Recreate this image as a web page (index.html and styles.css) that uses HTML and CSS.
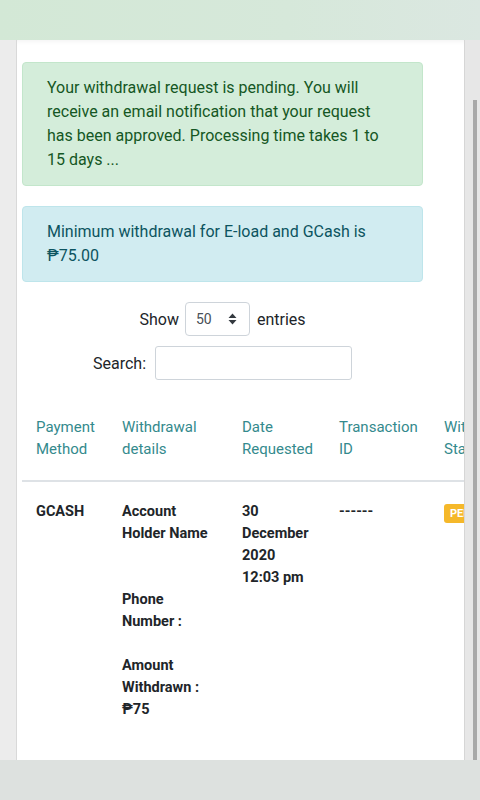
FILE: index.html
```html
<!DOCTYPE html>
<html>
<head>
  <title>Withdrawal History</title>
  <meta charset="UTF-8">
  <meta name="viewport" content="width=device-width, initial-scale=1.0">
  <link rel="stylesheet" href="styles.css">
</head>
<body>
  <div class="topbar"></div>

  <div class="frame">
    <div class="gutter-left"></div>

    <div class="card">
      <div class="content">
        <!-- Notices -->
        <div class="alert alert-success">
          Your withdrawal request is pending. You will receive an email notification that your request has been approved. Processing time takes 1 to 15 days ...
        </div>
        <div class="alert alert-info">
          Minimum withdrawal for E-load and GCash is &#8369;75.00
        </div>

        <!-- Table controls -->
        <div class="controls">
          <label class="control">Show
            <span class="select">50
              <svg class="arrows" width="9" height="12" viewBox="0 0 9 12"><path d="M4.5 0.5L8.5 5H0.5Z M4.5 11.5L8.5 7H0.5Z" fill="#343a40"/></svg>
            </span>
            entries</label>
          <label class="control">Search: <input type="text" class="search"></label>
        </div>

        <!-- Table -->
        <table class="history">
          <colgroup>
            <col style="width:86px">
            <col style="width:120px">
            <col style="width:97px">
            <col style="width:105px">
            <col style="width:90px">
          </colgroup>
          <thead>
            <tr>
              <th>Payment Method</th>
              <th>Withdrawal details</th>
              <th>Date Requested</th>
              <th>Transaction ID</th>
              <th>Withdrawal Status</th>
            </tr>
          </thead>
          <tbody>
            <tr>
              <td>GCASH</td>
              <td>
                Account Holder Name<br><br><br>
                Phone Number :<br><br>
                Amount Withdrawn : &#8369;75
              </td>
              <td>30 December 2020 12:03 pm</td>
              <td>------</td>
              <td><span class="badge">PENDING</span></td>
            </tr>
          </tbody>
        </table>
      </div>
    </div>

    <div class="gutter-right"><div class="scrollbar"></div></div>
  </div>

  <div class="bottombar"></div>
</body>
</html>
```

FILE: styles.css
```css
* { box-sizing: border-box; }
body { margin: 0; font-family: Roboto, "DejaVu Sans", sans-serif; color: #212529; background: #e8e8e8; height: 800px; overflow: hidden; }

.topbar { height: 40px; background: linear-gradient(90deg, #d3e8d6, #d6e8da 60%, #dbe7e1); }
.bottombar { height: 40px; background: #dde1df; }

.frame { display: flex; height: 720px; }
.gutter-left { width: 17px; background: #ececec; border-right: 1px solid #d9d9d9; }
.gutter-right { width: 16px; background: #e7e7e7; border-left: 1px solid #d6d6d6; padding: 60px 0 0 8px; }
.scrollbar { width: 4px; height: 100%; background: #a9a9a9; }

.card { width: 447px; background: #fff; overflow: hidden; padding: 22px 0 0 5px; box-shadow: inset 0 6px 6px -6px rgba(0,0,0,0.08); }
.content { width: 401px; }

.alert { font-size: 16px; line-height: 24px; padding: 13px 24px; border: 1px solid transparent; border-radius: 4px; margin-bottom: 20px; }
.alert-success { background: #d4edda; border-color: #c3e6cb; color: #155724; }
.alert-info { background: #d1ecf1; border-color: #bee5eb; color: #0c5460; }

.controls { display: flex; flex-direction: column; align-items: center; gap: 10px; margin-top: 19px; font-size: 16px; }
.control { display: flex; align-items: center; gap: 6px; }
.select { display: flex; align-items: center; justify-content: space-between; width: 65px; height: 34px; padding: 0 12px 0 10px; margin-right: 1px; border: 1px solid #ced4da; border-radius: 4px; font-size: 14px; color: #495057; }
.arrows { display: block; }
.search { width: 197px; height: 34px; margin-left: 3px; border: 1px solid #ced4da; border-radius: 3px; }

.history { border-collapse: collapse; table-layout: fixed; width: 498px; margin-top: 36px; font-size: 15px; line-height: 22px; }
.history th { text-align: left; font-weight: 400; color: #348a8d; padding: 0 10px 20px 14px; border-bottom: 2px solid #dee2e6; vertical-align: top; }
.history td { font-weight: 700; font-size: 14.5px; padding: 19px 10px 0 14px; vertical-align: top; }
.badge { display: inline-block; background: #f5b82a; color: #fff; font-size: 11px; line-height: 15px; padding: 2px 6px; border-radius: 3px; margin-top: 3px; }
```
